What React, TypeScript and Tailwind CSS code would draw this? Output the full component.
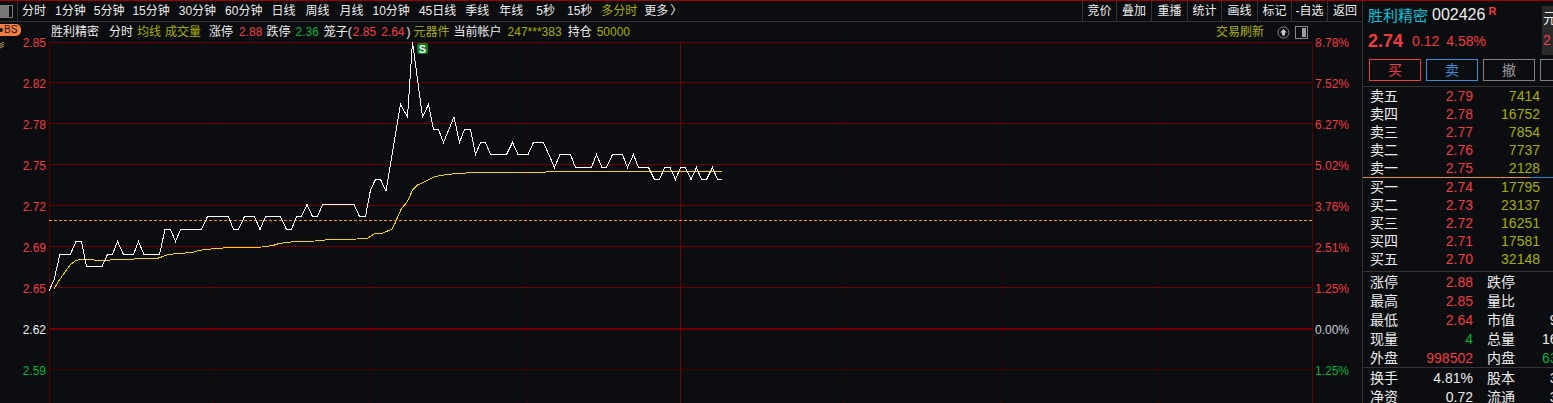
const FONT = "font-['Liberation_Sans','Noto_Sans_CJK_SC',sans-serif]";

const RED = "text-[#f23b3f]";
const OLIVE = "text-[#a8ad00]";
const GREEN = "text-[#00b33c]";
const WHITE = "text-[#ececec]";

const PERIODS: [string, string][] = [
  ["分时", "ml-[4px]"],
  ["1分钟", "ml-[9px]"],
  ["5分钟", "ml-[8px]"],
  ["15分钟", "ml-[8px]"],
  ["30分钟", "ml-[9px]"],
  ["60分钟", "ml-[9px]"],
  ["日线", "ml-[9px]"],
  ["周线", "ml-[10px]"],
  ["月线", "ml-[10px]"],
  ["10分钟", "ml-[9px]"],
  ["45日线", "ml-[9px]"],
  ["季线", "ml-[9px]"],
  ["年线", "ml-[10px]"],
  ["5秒", "ml-[13px]"],
  ["15秒", "ml-[12px]"],
];

const TOOLS: [string, string][] = [
  ["竞价", "w-[34px]"],
  ["叠加", "w-[35px]"],
  ["重播", "w-[36px]"],
  ["统计", "w-[34px]"],
  ["画线", "w-[36px]"],
  ["标记", "w-[34px]"],
  ["-自选", "w-[36px]"],
  ["返回", "w-[35px]"],
];

const LEFT_AXIS: [string, string][] = [
  ["2.85", RED], ["2.82", RED], ["2.78", RED], ["2.75", RED], ["2.72", RED],
  ["2.69", RED], ["2.65", RED], ["2.62", WHITE], ["2.59", GREEN],
];
const RIGHT_AXIS: [string, string][] = [
  ["8.78%", RED], ["7.52%", RED], ["6.27%", RED], ["5.02%", RED], ["3.76%", RED],
  ["2.51%", RED], ["1.25%", RED], ["0.00%", "text-[#c8d0d8]"], ["1.25%", GREEN],
];

const ASKS = [
  ["卖五", "2.79", "7414"],
  ["卖四", "2.78", "16752"],
  ["卖三", "2.77", "7854"],
  ["卖二", "2.76", "7737"],
  ["卖一", "2.75", "2128"],
];
const BIDS = [
  ["买一", "2.74", "17795"],
  ["买二", "2.73", "23137"],
  ["买三", "2.72", "16251"],
  ["买四", "2.71", "17581"],
  ["买五", "2.70", "32148"],
];

const STATS: [string, string, string, string, string, string][] = [
  ["涨停", "2.88", RED, "跌停", "2.36", GREEN],
  ["最高", "2.85", RED, "量比", "1.32", RED],
  ["最低", "2.64", RED, "市值", "9.32亿", WHITE],
  ["现量", "4", GREEN, "总量", "163.4万", WHITE],
  ["外盘", "998502", RED, "内盘", "63.56万", GREEN],
];

// chart coords are page coords, shifted to the svg origin (x=49 y=42) in toPoints
const PRICE = [
  [49, 291], [54, 280], [60, 254], [70.5, 254], [76, 241.5], [81.5, 241.5], [86.5, 266.5], [102, 266.5],
  [107.5, 254.5], [112.5, 254.5], [117.5, 241.5], [123.5, 254.5], [133.5, 254.5], [138.5, 241.5], [144, 254.5],
  [159.5, 254.5], [165, 229.5], [170.5, 229.5], [175.5, 241.5], [180.5, 229.5], [201.5, 229.5], [207.5, 216.5],
  [228.5, 216.5], [233.5, 229.5], [238.5, 229.5], [244.5, 216.5], [254.5, 216.5], [260, 229.5], [265.5, 216.5],
  [280.5, 216.5], [286.5, 229.5], [291.5, 229.5], [296.5, 216.5], [301.5, 216.5], [307, 204.5], [312.5, 216.5],
  [317.5, 216.5], [322.5, 204.5], [354, 204.5], [359.5, 216.5], [365.5, 216.5], [370.5, 190], [375.5, 179.5],
  [380.5, 179.5], [386, 191], [400.5, 104.5], [407.5, 117], [412.5, 42], [422.5, 117], [428.5, 104.5],
  [433.5, 129.5], [438.5, 129.5], [443.5, 142.5], [454, 117], [459.5, 142.5], [464.5, 129.5], [470.5, 129.5],
  [475.5, 154.5], [480.5, 142.5], [485.5, 142.5], [490.5, 154.5], [506.5, 154.5], [512.5, 142.5], [518, 154.5],
  [528, 154.5], [533.5, 142.5], [543.5, 142.5], [554.5, 167.5], [560, 154.5], [570.5, 154.5], [575.5, 167.5],
  [591.5, 167.5], [596.5, 154.5], [602, 167.5], [606.5, 167.5], [612.5, 154.5], [622.5, 154.5], [627.5, 167.5],
  [633.5, 154.5], [638.5, 167.5], [648.5, 167.5], [654.5, 179.5], [659.5, 179.5], [664.5, 167.5], [670, 167.5],
  [675.5, 179.5], [680.5, 167.5], [685.5, 167.5], [691, 179.5], [696.5, 167.5], [701.5, 179.5], [706.5, 179.5],
  [712.5, 167.5], [717.5, 179.5], [722, 179.5],
];
const AVERAGE = [
  [54, 289], [58, 282], [65, 272], [70.5, 264.5], [76, 260.5], [80, 259.5], [93, 259.5], [95, 260.5], [110, 260],
  [112, 259.5], [157, 258.5], [163, 256.5], [168, 254.5], [178, 253.5], [193, 252.5], [197, 251], [205, 249.5],
  [217, 248.5], [230, 247.5], [262, 247], [273, 245.5], [279, 243.5], [288, 242.5], [295, 241.5], [315, 241],
  [317, 240.5], [333, 239.5], [357, 239], [367, 238.5], [375, 233.5], [383, 233], [392, 229], [395, 223.5],
  [398.5, 215], [401.5, 208.5], [407.5, 201.5], [412.5, 190], [417.5, 185], [425, 181.5], [435, 176.5],
  [446.5, 174.5], [458.5, 173.5], [473.5, 172.5], [545.5, 172.5], [546.5, 171.5], [722, 171.5],
];

const toPoints = (pts: number[][]) => pts.map(([x, y]) => `${x - 49},${y - 42}`).join(" ");

const H_LINES = [0.5, 40.5, 81.5, 122.5, 163.5, 204.5, 245.5];
const DOTTED = [212.5, 369.5, 527.5, 843.5, 1000.5, 1158.5];

function Chart() {
  return (
    <svg width="1264" height="361" className="block shrink-0">
      {H_LINES.map((y) => (
        <line key={y} x1="0" x2="1264" y1={y} y2={y} stroke="#6e0000" />
      ))}
      <line x1="0" x2="1264" y1="287" y2="287" stroke="#6e0000" strokeWidth="2" />
      <line x1="0" x2="1264" y1="327.5" y2="327.5" stroke="#4e0000" />
      {DOTTED.map((x) => (
        <line key={x} x1={x - 49} x2={x - 49} y1="0" y2="361" stroke="#5a0000" strokeDasharray="1 3" />
      ))}
      <line x1="0.5" x2="0.5" y1="0" y2="361" stroke="#5a0000" />
      <line x1="631.5" x2="631.5" y1="0" y2="361" stroke="#7a0000" />
      <line x1="1263.5" x2="1263.5" y1="0" y2="361" stroke="#5a0000" />
      <line x1="0" x2="1264" y1="178.5" y2="178.5" stroke="#f09a1a" strokeDasharray="3 2" />
      <polyline points={toPoints(AVERAGE)} fill="none" stroke="#f2d400" strokeWidth="1" shapeRendering="crispEdges" />
      <polyline points={toPoints(PRICE)} fill="none" stroke="#ffffff" strokeWidth="1" shapeRendering="crispEdges" />
      <rect x="368" y="1" width="11" height="11" rx="2" fill="#0b7a1e" />
      <text x="373.5" y="10.5" textAnchor="middle" fontSize="11" fontWeight="700" fill="#ffffff" fontFamily="Liberation Sans">
        S
      </text>
    </svg>
  );
}

function QuoteRow({ row }: { row: string[] }) {
  return (
    <div className="flex h-[18px] items-center pl-[7px] text-[14px] leading-none">
      <span className={`w-[56px] ${WHITE}`}>{row[0]}</span>
      <span className={`w-[47px] text-right ${RED}`}>{row[1]}</span>
      <span className={`w-[67px] text-right ${OLIVE}`}>{row[2]}</span>
    </div>
  );
}

function StatRow({ cells }: { cells: string[] }) {
  const [a, b, c, d, e, f] = cells;
  return (
    <div className="flex h-[19px] items-center pl-[7px] text-[14px] leading-none">
      <span className={`w-[42px] shrink-0 ${WHITE}`}>{a}</span>
      <span className={`w-[61px] shrink-0 text-right ${c}`}>{b}</span>
      <span className={`ml-[14px] w-[28px] shrink-0 ${WHITE}`}>{d}</span>
      <span className={`w-[76px] shrink-0 text-right ${f}`}>{e}</span>
    </div>
  );
}

export default function App() {
  return (
    <div className={`h-[403px] w-[1553px] overflow-hidden border-t border-[#a00000] bg-[#0c0d10] ${FONT}`}>
      <div className="flex h-[402px]">
        {/* left: toolbar + chart */}
        <div className="flex w-[1362px] shrink-0 flex-col">
          <div className={`flex h-[21px] shrink-0 items-center border-b border-[#333333] text-[12px] leading-none ${WHITE}`}>
            <div className="flex h-[13px] w-[13px] items-stretch border border-[#777777]">
              <div className="w-[8px] bg-[#777777]" />
            </div>
            <div className="ml-[4px] h-full w-px bg-[#333333]" />
            <div className="flex items-center">
              {PERIODS.map(([label, cls]) => (
                <span key={label} className={cls}>
                  {label}
                </span>
              ))}
              <span className={`ml-[9px] ${OLIVE}`}>多分时</span>
              <span className="ml-[7px]">更多</span>
              <span className="ml-[2px]">〉</span>
            </div>
            <div className="ml-auto flex h-full">
              {TOOLS.map(([label, w]) => (
                <span key={label} className={`flex items-center justify-center border-l border-[#333333] ${w}`}>
                  {label}
                </span>
              ))}
            </div>
          </div>
          <div className={`flex h-[20px] shrink-0 items-center pl-[51px] text-[12px] leading-none ${WHITE}`}>
            <span>胜利精密</span>
            <span className="ml-[10px]">分时</span>
            <span className={`ml-[4px] ${OLIVE}`}>均线</span>
            <span className={`ml-[4px] ${OLIVE}`}>成交量</span>
            <span className="ml-[8px]">涨停</span>
            <span className={`ml-[6px] ${RED}`}>2.88</span>
            <span className="ml-[4px]">跌停</span>
            <span className={`ml-[5px] ${GREEN}`}>2.36</span>
            <span className="ml-[5px]">笼子(</span>
            <span className={`ml-[1px] ${RED}`}>2.85</span>
            <span className={`ml-[5px] ${RED}`}>2.64</span>
            <span className="ml-[2px]">)</span>
            <span className={`ml-[3px] ${OLIVE}`}>元器件</span>
            <span className="ml-[4px]">当前帐户</span>
            <span className={`ml-[6px] ${OLIVE}`}>247***383</span>
            <span className="ml-[6px]">持仓</span>
            <span className={`ml-[5px] ${OLIVE}`}>50000</span>
            <span className={`ml-auto ${OLIVE}`}>交易刷新</span>
            <svg width="13" height="13" viewBox="0 0 13 13" className="ml-[13px]">
              <circle cx="6.5" cy="6.5" r="5.5" fill="none" stroke="#8a8a8a" />
              <path d="M6.5 3 10 6.5H8V9.5H5V6.5H3Z" fill="#c8c8c8" />
            </svg>
            <div className="ml-[5px] mr-[54px] flex h-[13px] w-[13px] justify-end border border-[#8a8a8a] p-px">
              <div className="w-[4px] bg-[#9a9a9a]" />
            </div>
          </div>
          <div className="flex min-h-0 flex-1">
            <div className="relative z-10 mt-[-20px] w-[49px] shrink-0 text-[12px]">
              <div className="absolute left-0 top-[2px] flex h-[12px] w-[21px] items-center rounded-r-[5px] bg-[#f47c45] text-[10px] leading-none text-[#1a1a1a]">
                <span className="mr-[1px] h-[4px] w-[3px] rounded-r-full bg-[#1a1a1a]" />
                BS
              </div>
              <svg width="5" height="7" viewBox="0 0 5 7" className="absolute left-0 top-[20px]">
                <path d="M0 2 4 0M0 4 4 2M0 6 4 4" fill="none" stroke="#b8a060" />
              </svg>
              {LEFT_AXIS.map(([label, color]) => (
                <div key={label} className={`flex h-[41px] items-center justify-end pr-[3px] leading-none ${color}`}>
                  {label}
                </div>
              ))}
            </div>
            <Chart />
            <div className="relative z-10 mt-[-20px] w-[49px] shrink-0 text-[12px]">
              {RIGHT_AXIS.map(([label, color], i) => (
                <div key={`${label}${i}`} className={`flex h-[41px] items-center pl-[2px] leading-none ${color}`}>
                  {label}
                </div>
              ))}
            </div>
          </div>
        </div>

        {/* right: quote panel */}
        <div className="relative w-[191px] shrink-0 border-l border-[#333333]">
          <div className="absolute right-0 top-[5px] flex h-[49px] w-[11px] flex-col overflow-hidden bg-[#2a2a2a] pl-[1px] text-[14px] leading-none">
            <span className={`mt-[5px] ${WHITE}`}>元</span>
            <span className={`mt-[8px] ${RED}`}>2</span>
          </div>
          <div className="flex h-[22px] items-end pl-[5px] leading-none">
            <span className="text-[15px] text-[#00c4dc]">胜利精密</span>
            <span className={`ml-[4px] text-[16px] ${WHITE}`}>002426</span>
            <span className={`mb-[6px] ml-[3px] text-[11px] font-bold ${RED}`}>R</span>
          </div>
          <div className={`mt-[5px] flex h-[26px] items-center pl-[5px] leading-none ${RED}`}>
            <span className="text-[18px] font-bold">2.74</span>
            <span className="ml-[9px] text-[14px]">0.12</span>
            <span className="ml-[7px] text-[14px]">4.58%</span>
          </div>
          <div className="mt-[5px] flex gap-[5px] pl-[6px] text-[14px] leading-none">
            <div className={`flex h-[22px] w-[52px] shrink-0 items-center justify-center border border-[#f23b3f] ${RED}`}>买</div>
            <div className="flex h-[22px] w-[52px] shrink-0 items-center justify-center border border-[#3a8fd8] text-[#3a8fd8]">卖</div>
            <div className="flex h-[22px] w-[52px] shrink-0 items-center justify-center border border-[#808080] text-[#9a9a9a]">撤</div>
            <div className="h-[22px] w-[52px] shrink-0 border border-[#808080]" />
          </div>
          <div className="mt-[5px] border-t border-[#333333]">
            {ASKS.map((row) => (
              <QuoteRow key={row[0]} row={row} />
            ))}
          </div>
          <div className="flex h-px">
            <div className="w-[167px] bg-[#e8960f]" />
            <div className="flex-1 bg-[#2f86d0]" />
          </div>
          <div>
            {BIDS.map((row) => (
              <QuoteRow key={row[0]} row={row} />
            ))}
          </div>
          <div className="mt-[3px] border-t border-[#333333]">
            {STATS.map((cells) => (
              <StatRow key={cells[0]} cells={cells} />
            ))}
          </div>
          <div className="border-t border-[#333333]">
            <StatRow cells={["换手", "4.81%", WHITE, "股本", "3.40亿", WHITE]} />
            <StatRow cells={["净资", "0.72", WHITE, "流通", "3.39亿", WHITE]} />
          </div>
        </div>
      </div>
    </div>
  );
}
